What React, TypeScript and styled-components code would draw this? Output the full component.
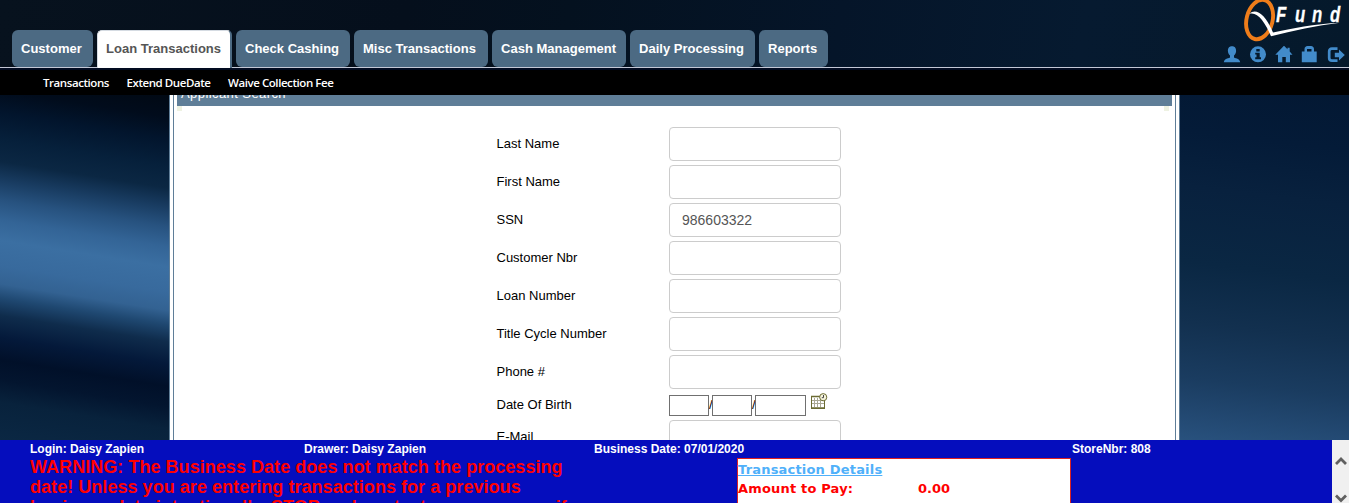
import React from "react";
import styled, { createGlobalStyle } from "styled-components";

const GlobalStyle = createGlobalStyle`
  * { box-sizing: border-box; }
  body { margin: 0; overflow: hidden; font-family: "Liberation Sans", Arial, sans-serif; }
`;

const Page = styled.div`
  display: flex;
  flex-direction: column;
  width: 1349px;
  height: 503px;
  overflow: hidden;
`;

const Header = styled.header`
  display: flex;
  justify-content: space-between;
  flex: none;
  height: 68px;
  border-bottom: 1px solid #c3c7d6;
  background: linear-gradient(100deg, #07121e 0%, #050f1c 30%, #04111f 42%, #051529 62%, #061a30 80%, #05192b 100%);
`;

const Tabs = styled.nav`
  display: flex;
  gap: 4px;
  padding: 30px 0 0 12px;
`;

const Tab = styled.a<{ $width: number; $active?: boolean }>`
  width: ${(p) => p.$width}px;
  height: ${(p) => (p.$active ? 38 : 37)}px;
  padding-left: ${(p) => (p.$active ? 8 : 9)}px;
  border: solid ${(p) => (p.$active ? "#d5dbe2" : "#4c6a83")};
  border-width: ${(p) => (p.$active ? "1px 2px 0 1px" : "0")};
  border-right-color: #4c6a83;
  border-radius: ${(p) => (p.$active ? "5px 5px 0 0" : "6px")};
  background: ${(p) => (p.$active ? "#fff" : "#4c6a83")};
  color: ${(p) => (p.$active ? "#555" : "#fff")};
  font-size: 13px;
  font-weight: bold;
  line-height: ${(p) => (p.$active ? 35 : 37)}px;
  letter-spacing: 0.01px;
  white-space: nowrap;
`;

const Brand = styled.div`
  display: flex;
  flex-direction: column;
  width: 130px;
`;

const IconRow = styled.div`
  display: flex;
  gap: 8px;
  padding: 3px 0 0 4px;
`;

const SubMenu = styled.nav`
  display: flex;
  flex: none;
  gap: 18px;
  height: 27px;
  padding-left: 43px;
  border-top: 2px solid #020b20;
  background: #000;
  color: #fff;
  font: 600 11.5px/25px "Open Sans", "Noto Sans", sans-serif;
  letter-spacing: -0.43px;
  white-space: nowrap;
`;

const SubItem = styled.a<{ $width: number }>`
  width: ${(p) => p.$width}px;
`;

const Body = styled.main`
  display: flex;
  flex: 1;
  min-height: 0;
  overflow: hidden;
`;

const LeftGlow = styled.div`
  width: 169px;
  background: linear-gradient(
    189deg,
    #010914 0px, #010c1c 22px, #02152d 44px, #06203b 70px, #0b2743 92px,
    #183b60 110px, #27527f 130px, #336496 150px, #3b6fa2 170px, #386a9d 195px,
    #336292 213px, #1f4871 227px, #0f2c4c 244px, #04193a 266px, #011029 288px,
    #03152f 308px, #08223c 330px, #0b2844 372px
  );
`;

const RightGlow = styled.div`
  flex: 1;
  background: linear-gradient(187deg, #031833 0px, #041b38 55px, #08213e 110px, #0a2743 185px, #12304f 245px, #1a3c60 300px, #29527f 366px);
`;

const Panel = styled.section`
  width: 1011px;
  padding: 0 3px;
  border: solid #5f7e98;
  border-width: 0 1px;
  background: #fff;
`;

const PanelInner = styled.div`
  height: 100%;
  padding: 0 3px;
  border: solid #5f7e98;
  border-width: 0 1px;
`;

const PanelTitle = styled.h2`
  height: 11px;
  margin: 0;
  padding-left: 4px;
  overflow: hidden;
  background: #5f7e98;
  color: #fff;
  font-size: 13px;
  font-weight: normal;
  line-height: 15px;
  letter-spacing: 0.42px;

  span { display: block; margin-top: -9px; }
`;

const Corners = styled.div`
  display: flex;
  justify-content: space-between;
  height: 5px;
  padding-right: 3px;

  i { width: 5px; background: #eef2e2; }
`;

const Form = styled.form`
  display: flex;
  flex-direction: column;
  gap: 4px;
  padding: 16px 0 0 319px;
`;

const Field = styled.div<{ $height?: number }>`
  display: flex;
  flex: none;
  width: 360px;
  height: ${(p) => p.$height ?? 34}px;
`;

const Label = styled.label`
  width: 173px;
  padding-left: 0.5px;
  color: #000;
  font-size: 13px;
  line-height: 33px;
`;

const DateLabel = styled(Label)`
  line-height: 23px;
`;

const TextInput = styled.input`
  width: 172px;
  height: 34px;
  padding: 0 12px;
  border: 1px solid #ccc;
  border-radius: 4px;
  color: #555;
  font: 14px "Liberation Sans", Arial, sans-serif;
`;

const DateParts = styled.div`
  display: flex;
  padding-top: 2px;
  font-size: 13px;
  line-height: 20px;

  span { width: 3px; }
`;

const DateBox = styled.input<{ $width: number }>`
  width: ${(p) => p.$width}px;
  height: 21px;
  padding: 1px;
  border: 1px solid #707070;
`;

const Calendar = styled.svg`
  margin: -2px 0 0 5px;
`;

const Footer = styled.footer`
  display: flex;
  flex: none;
  height: 63px;
  background: #050dbd;
`;

const FooterMain = styled.div`
  width: 1332px;
  overflow: hidden;
`;

const Status = styled.div`
  display: flex;
  height: 18px;
  padding-left: 30px;
  color: #fff;
  font-size: 12px;
  font-weight: bold;
  line-height: 18px;
`;

const StatusItem = styled.span<{ $width: number }>`
  width: ${(p) => p.$width}px;
  white-space: nowrap;
`;

const FooterRow = styled.div`
  display: flex;
  padding-left: 30px;
`;

const Warning = styled.p`
  width: 707px;
  height: 46px;
  margin: -1px 0 0;
  overflow: hidden;
  color: #f00;
  font-size: 18px;
  font-weight: bold;
  line-height: 20px;
  letter-spacing: 0.045px;
  white-space: nowrap;
`;

const Details = styled.div`
  width: 334px;
  height: 50px;
  border: 1px solid #d22;
  background: #fff;
  color: #f00;
  font: bold 13px/19px "DejaVu Sans", Verdana, sans-serif;
`;

const DetailsTitle = styled.a`
  display: block;
  height: 20px;
  line-height: 21px;
  letter-spacing: 0.19px;
  color: #4fb0fa;
  text-decoration: underline;
`;

const Amount = styled.div`
  display: flex;

  span { width: 180px; letter-spacing: 0.18px; }
`;

const ScrollBar = styled.div`
  display: flex;
  flex-direction: column;
  align-items: center;
  justify-content: space-between;
  width: 17px;
  padding: 16px 0 0;
  background: #f0f0f0;
`;

const ACCENT = "#428bca";

const Logo = () => (
  <svg width="130" height="43" viewBox="0 0 130 43">
    <ellipse cx="40.6" cy="19.6" rx="13" ry="20" transform="rotate(14 40.6 19.6)" fill="none" stroke="#ef7d1a" strokeWidth="3.9" />
    <path d="M30.5 13.8C37 7.5 47 15 54 32.6C73 28.5 95 24 121 22.8C97 25.6 74 31 52 36.3C46 22 38.5 11.5 30.5 13.8Z" fill="#fff" />
    <g fill="#fff" stroke="#fff" strokeWidth="0.3" fontFamily="Liberation Sans, Arial, sans-serif" fontStyle="italic" fontWeight="bold" fontSize="22">
      {[["F", 57], ["u", 76], ["n", 93], ["d", 111]].map(([c, x]) => (
        <text key={c} transform={`translate(${x} 22) scale(0.76 1)`}>{c}</text>
      ))}
    </g>
  </svg>
);

const HeaderIcons = () => (
  <IconRow>
    <svg width="18" height="18" viewBox="0 0 18 18" fill={ACCENT}>
      <path d="M9 0.2C5.8 0.2 4.8 2.5 4.9 5C5 7.2 6 8.7 7 9.6V11.4C4.5 12.5 1.2 12.8 0.8 16.2H17.2C16.8 12.8 13.5 12.5 11 11.4V9.6C12 8.7 13 7.2 13.1 5C13.2 2.5 12.2 0.2 9 0.2Z" />
    </svg>
    <svg width="18" height="18" viewBox="0 0 18 18">
      <circle cx="9" cy="8.3" r="8" fill={ACCENT} />
      <path d="M7.3 3H10.7V5.5H7.3ZM6.2 6.8H10.7V11.3H12V13.2H6.2V11.3H7.5V8.5H6.2Z" fill="#05192b" />
    </svg>
    <svg width="18" height="18" viewBox="0 0 18 18" fill={ACCENT}>
      <path d="M9 -0.3L12.5 3.2V1.7H14.7V5.4L17.5 8.7H15V16.2H10.8V11H7.3V16.2H3V8.7H0.3Z" />
    </svg>
    <svg width="18" height="18" viewBox="0 0 18 18" fill={ACCENT}>
      <path fillRule="evenodd" d="M0.8 5.6H3.5V3.2C3.5 1.4 4.8 0.1 6.5 0.1H10C11.8 0.1 13 1.4 13 3.2V5.6H15.7V16.2H0.8ZM6 5.6H10.5V2.9H6Z" />
    </svg>
    <svg width="18" height="18" viewBox="0 0 18 18">
      <path d="M10.5 2.7H5C3 2.7 2.2 3.7 2.2 5.3V12C2.2 13.6 3 14.6 5 14.6H10.5" fill="none" stroke={ACCENT} strokeWidth="2.7" />
      <path d="M7.8 6.7H12V3.6L17.8 9L12 14.4V11.3H7.8Z" fill={ACCENT} />
    </svg>
  </IconRow>
);

const CalendarIcon = () => (
  <Calendar width="17" height="17" viewBox="0 0 17 17">
    <rect x="0.5" y="3.5" width="13" height="11.5" fill="#fff" stroke="#6b6b33" />
    <path d="M0 3.5H14M0 15.2H14" stroke="#6b6b33" strokeWidth="1.6" />
    <path d="M3.5 5V14M6.5 5V14M9.5 5V14M1 7.5H13M1 10.5H13" stroke="#aaa894" />
    <circle cx="12.2" cy="4.2" r="3.6" fill="#f6f4dc" stroke="#6b6b33" />
    <path d="M12.5 2V4.7H10.8" fill="none" stroke="#444" />
  </Calendar>
);

const tabs = [
  { text: "Customer", width: 81 },
  { text: "Loan Transactions", width: 135, active: true },
  { text: "Check Cashing", width: 114 },
  { text: "Misc Transactions", width: 134 },
  { text: "Cash Management", width: 134 },
  { text: "Daily Processing", width: 125 },
  { text: "Reports", width: 69 },
];

const fields = [
  ["Last Name", ""],
  ["First Name", ""],
  ["SSN", "986603322"],
  ["Customer Nbr", ""],
  ["Loan Number", ""],
  ["Title Cycle Number", ""],
  ["Phone #", ""],
];

export default function App() {
  return (
    <Page>
      <GlobalStyle />
      <Header>
        <Tabs>
          {tabs.map((t) => (
            <Tab key={t.text} $width={t.width} $active={t.active}>{t.text}</Tab>
          ))}
        </Tabs>
        <Brand>
          <Logo />
          <HeaderIcons />
        </Brand>
      </Header>
      <SubMenu>
        <SubItem $width={65.5}>Transactions</SubItem>
        <SubItem $width={83.5}>Extend DueDate</SubItem>
        <SubItem $width={108}>Waive Collection Fee</SubItem>
      </SubMenu>
      <Body>
        <LeftGlow />
        <Panel>
          <PanelInner>
            <PanelTitle><span>Applicant Search</span></PanelTitle>
            <Corners><i /><i /></Corners>
            <Form>
              {fields.map(([label, value]) => (
                <Field key={label}>
                  <Label>{label}</Label>
                  <TextInput defaultValue={value} />
                </Field>
              ))}
              <Field $height={23}>
                <DateLabel>Date Of Birth</DateLabel>
                <DateParts>
                  <DateBox $width={40} /><span>/</span>
                  <DateBox $width={40} /><span>/</span>
                  <DateBox $width={51} />
                  <CalendarIcon />
                </DateParts>
              </Field>
              <Field>
                <Label>E-Mail</Label>
                <TextInput />
              </Field>
            </Form>
          </PanelInner>
        </Panel>
        <RightGlow />
      </Body>
      <Footer>
        <FooterMain>
          <Status>
            <StatusItem $width={274}>Login: Daisy Zapien</StatusItem>
            <StatusItem $width={290}>Drawer: Daisy Zapien</StatusItem>
            <StatusItem $width={478}>Business Date: 07/01/2020</StatusItem>
            <StatusItem $width={80}>StoreNbr: 808</StatusItem>
          </Status>
          <FooterRow>
            <Warning>
              WARNING: The Business Date does not match the processing<br />
              date! Unless you are entering transactions for a previous<br />
              business date intentionally, STOP and contact your manager if
            </Warning>
            <Details>
              <DetailsTitle>Transaction Details</DetailsTitle>
              <Amount><span>Amount to Pay:</span><b>0.00</b></Amount>
            </Details>
          </FooterRow>
        </FooterMain>
        <ScrollBar>
          <svg width="12" height="10" viewBox="0 0 12 10"><path d="M1 8L6 3L11 8" fill="none" stroke="#606060" strokeWidth="2.8" /></svg>
          <svg width="12" height="10" viewBox="0 0 12 10"><path d="M1 2.5L6 7.5L11 2.5" fill="none" stroke="#606060" strokeWidth="2.8" /></svg>
        </ScrollBar>
      </Footer>
    </Page>
  );
}
